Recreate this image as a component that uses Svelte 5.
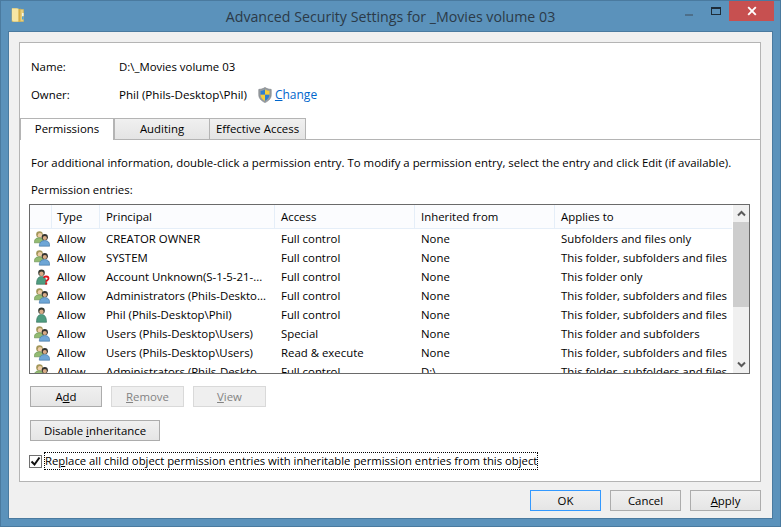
<script>
  const rows = [
    { kind: 'group', type: 'Allow', principal: 'CREATOR OWNER', access: 'Full control', inherited: 'None', applies: 'Subfolders and files only' },
    { kind: 'group', type: 'Allow', principal: 'SYSTEM', access: 'Full control', inherited: 'None', applies: 'This folder, subfolders and files' },
    { kind: 'unknown', type: 'Allow', principal: 'Account Unknown(S-1-5-21-...', access: 'Full control', inherited: 'None', applies: 'This folder only' },
    { kind: 'group', type: 'Allow', principal: 'Administrators (Phils-Deskto...', access: 'Full control', inherited: 'None', applies: 'This folder, subfolders and files' },
    { kind: 'user', type: 'Allow', principal: 'Phil (Phils-Desktop\\Phil)', access: 'Full control', inherited: 'None', applies: 'This folder, subfolders and files' },
    { kind: 'group', type: 'Allow', principal: 'Users (Phils-Desktop\\Users)', access: 'Special', inherited: 'None', applies: 'This folder and subfolders' },
    { kind: 'group', type: 'Allow', principal: 'Users (Phils-Desktop\\Users)', access: 'Read & execute', inherited: 'None', applies: 'This folder, subfolders and files' },
    { kind: 'group', type: 'Allow', principal: 'Administrators (Phils-Deskto...', access: 'Full control', inherited: 'D:\\', applies: 'This folder, subfolders and files' }
  ];
</script>

<div class="window">
  <header class="titlebar">
    <div class="title-left">
      <svg class="folder" width="14" height="16" viewBox="0 0 14 16">
        <path d="M1 1.500h5l1 1h5.500v12H1z" fill="#e8cf7c" stroke="#d9bb5c" stroke-width=".6"/>
        <path d="M1 1.500h6.500v13H2.500L1 13z" fill="#f6e6a4"/>
        <path d="M7.500 2.500l2-1v13l-2 .5z" fill="#d4ae48"/>
        <rect x="11" y="6" width="1.600" height="3" fill="#f4f4e8"/>
        <rect x="11" y="9.500" width="1.600" height="3" fill="#4fa3dc"/>
      </svg>
    </div>
    <h1>Advanced Security Settings for _Movies volume 03</h1>
    <div class="controls">
      <span class="min"></span>
      <span class="max"></span>
      <span class="close">
        <svg width="10" height="10" viewBox="0 0 10 10"><path d="M1.200 1.200l7.600 7.600M8.800 1.200l-7.600 7.600" stroke="#fff" stroke-width="1.900"/></svg>
      </span>
    </div>
  </header>

  <main class="client">
    <section class="panel">
      <div class="info">
        <div class="info-row"><span class="info-label">Name:</span><span>D:\_Movies volume 03</span></div>
        <div class="info-row">
          <span class="info-label">Owner:</span><span class="owner">Phil (Phils-Desktop\Phil)</span>
          <svg class="shield" width="14" height="16" viewBox="0 0 14 16">
            <path d="M7 .5C5 1.800 3 2.300.8 2.400v5.400c0 3.600 2.600 6.200 6.200 7.700 3.600-1.500 6.200-4.100 6.200-7.700V2.400C11 2.300 9 1.800 7 .5z" fill="#9a9ea2" stroke="#6f7478" stroke-width=".6"/>
            <path d="M7 2.400v5.300H2.600V3.900C4.300 3.800 5.700 3.300 7 2.400z" fill="#2f7fd0"/>
            <path d="M7 2.400c1.300.9 2.700 1.400 4.400 1.500v3.800H7z" fill="#f5cf3c"/>
            <path d="M2.600 7.700H7v6c-2.600-1.200-4.400-3.300-4.400-6z" fill="#f5cf3c"/>
            <path d="M7 7.700h4.400c0 2.700-1.800 4.800-4.400 6z" fill="#2f7fd0"/>
          </svg>
          <a class="link" href="#change"><u>C</u>hange</a>
        </div>
      </div>

      <nav class="tabs">
        <span class="tab active">Permissions</span>
        <span class="tab">Auditing</span>
        <span class="tab wide">Effective Access</span>
      </nav>

      <div class="tab-body">
        <p class="hint">For additional information, double-click a permission entry. To modify a permission entry, select the entry and click Edit (if available).</p>
        <p class="entries-label">Permission entries:</p>

        <div class="list">
          <div class="list-main">
            <div class="row head">
              <span class="cell icon-cell"></span>
              <span class="cell type">Type</span>
              <span class="cell">Principal</span>
              <span class="cell">Access</span>
              <span class="cell">Inherited from</span>
              <span class="cell">Applies to</span>
            </div>
            {#each rows as r}
              <div class="row">
                <span class="icon-cell">
                  <svg width="16" height="16" viewBox="0 0 16 16">
                    {#if r.kind === 'group'}
                      <circle cx="5.500" cy="3.500" r="3.300" fill="#a39658"/>
                      <circle cx="6" cy="4.300" r="2.200" fill="#eccba6"/>
                      <path d="M.3 11.800c0-3.800 2-5 5-5s4.500 1.200 4.500 5z" fill="#93bb72" stroke="#5f8a4a" stroke-width=".6"/>
                      <circle cx="10.800" cy="6.200" r="3.100" fill="#33332f"/>
                      <circle cx="10.800" cy="7" r="2.100" fill="#d8ab86"/>
                      <path d="M5.300 15.200c0-4 2.200-5.600 5.400-5.600s5 1.600 5 5.600z" fill="#6ea6d6" stroke="#3e6f9c" stroke-width=".6"/>
                    {:else}
                      <circle cx="7.500" cy="3.800" r="3.300" fill="#33372f"/>
                      <circle cx="7.500" cy="4.700" r="2.200" fill="#d8ab86"/>
                      <path d="M2.500 15.300c0-5.300 1.800-7.800 5-7.800s5 2.500 5 7.800z" fill="#4f9c80" stroke="#2f6d58" stroke-width=".6"/>
                      {#if r.kind === 'unknown'}
                        <path d="M9.800 8.700c.4-1.600 4.700-1.800 4.700.7 0 1.700-2.300 1.800-2.300 3.300" fill="none" stroke="#e0141c" stroke-width="1.800"/>
                        <rect x="11.200" y="13.500" width="2" height="2" fill="#e0141c"/>
                      {/if}
                    {/if}
                  </svg>
                </span>
                <span class="cell type">{r.type}</span>
                <span class="cell">{r.principal}</span>
                <span class="cell">{r.access}</span>
                <span class="cell">{r.inherited}</span>
                <span class="cell">{r.applies}</span>
              </div>
            {/each}
          </div>
          <div class="scrollbar">
            <svg width="17" height="17" viewBox="0 0 17 17"><path d="M5 10.500l3.500-3.500 3.500 3.500" fill="none" stroke="#5a5a5a" stroke-width="2"/></svg>
            <div class="track"><div class="thumb"></div></div>
            <svg width="17" height="17" viewBox="0 0 17 17"><path d="M5 6.500l3.500 3.500 3.500-3.500" fill="none" stroke="#5a5a5a" stroke-width="2"/></svg>
          </div>
        </div>

        <div class="btn-row">
          <button class="btn">A<u>d</u>d</button>
          <button class="btn off"><u>R</u>emove</button>
          <button class="btn off"><u>V</u>iew</button>
        </div>
        <button class="btn disable">Disable <u>i</u>nheritance</button>

        <label class="check">
          <span class="box">
            <svg width="11" height="11" viewBox="0 0 11 11"><path d="M1.500 5.500l3 3 5-7" fill="none" stroke="#111" stroke-width="2"/></svg>
          </span>
          <span class="check-text">Re<u>p</u>lace all child object permission entries with inheritable permission entries from this object</span>
        </label>
      </div>
    </section>

    <footer class="footer">
      <button class="btn foot default">OK</button>
      <button class="btn foot">Cancel</button>
      <button class="btn foot"><u>A</u>pply</button>
    </footer>
  </main>
</div>

<style>
  :global(body) { margin: 0; background: #5b92bb; }
  .window {
    box-sizing: border-box; width: 781px; height: 527px;
    background: #5b92bb; border: 1px solid #4a7a9f;
    display: flex; flex-direction: column;
    font: 11.4px/16px "Open Sans", "Noto Sans", sans-serif; color: #000;
  }
  .titlebar {
    height: 30px; flex: none;
    display: grid; grid-template-columns: 1fr auto 1fr; align-items: start;
  }
  .title-left { padding: 6px 0 0 10px; }
  .folder { display: block; }
  h1 { margin: 0; padding-top: 6px; font: 14.2px/20px "Open Sans", sans-serif; color: #2b3a48; }
  .controls { display: flex; justify-content: flex-end; padding-right: 6px; align-items: flex-start; }
  .min { width: 8px; height: 2px; background: #4d6f8a; margin: 13px 18px 0 0; }
  .max { box-sizing: border-box; width: 10px; height: 8px; border: 1px solid #1d2c38; border-top-width: 2px; margin: 6px 8px 0 0; }
  .close { width: 45px; height: 20px; background: #c75050; display: flex; align-items: center; justify-content: center; }

  .client {
    flex: 1; margin: 0 7px 7px; background: #f0f0f0;
    border: 1px solid #4a7a9f;
    box-sizing: border-box; display: flex; flex-direction: column;
    padding: 10px 11px 0 10px;
  }
  .panel {
    box-sizing: border-box; height: 440px; background: #fff;
    border: 1px solid #b4b4b4; display: flex; flex-direction: column;
  }
  .info { padding: 16px 0 0 11px; height: 59px; flex: none; }
  .info-row { display: flex; align-items: center; height: 16px; margin-bottom: 12px; }
  .info-label { width: 88px; }
  .owner { font-size: 11.6px; }
  .shield { margin: 0 3px 0 11px; }
  .link { color: #0066cc; text-decoration: none; font-size: 12px; }

  .tabs {
    display: flex; height: 21px; flex: none;
    border-bottom: 1px solid #b4b4b4;
  }
  .tab {
    box-sizing: border-box; width: 95px; height: 21px;
    display: flex; align-items: center; justify-content: center;
    border: 1px solid #b4b4b4; border-bottom: 0; border-left: 0;
    background: linear-gradient(#f0f0f0, #e4e4e4);
  }
  .tab.wide { width: 96px; }
  .tab.active { background: #fff; height: 22px; padding-bottom: 1px; border-left: 1px solid #b4b4b4; border-right-width: 2px; }

  .tab-body { padding: 0 10px; flex: 1; display: flex; flex-direction: column; }
  .hint { margin: 15px 0 0 1px; white-space: nowrap; }
  .entries-label { margin: 11px 0 0 1px; }

  .list {
    box-sizing: border-box; width: 721px; height: 170px; margin: 6px 0 0 -1px;
    border: 1px solid #6a6a6a; display: flex; overflow: hidden;
  }
  .list-main { width: 702px; flex: none; overflow: hidden; }
  .row {
    display: grid; grid-template-columns: 22px 48px 175px 140px 140px 178px;
    height: 19px; align-items: center;
  }
  .row.head { box-sizing: border-box; height: 24px; border-bottom: 1px solid #e5eef8; background: #fbfcfe; }
  .head .cell { height: 100%; border-right: 1px solid #e5eef8; display: flex; align-items: center; box-sizing: border-box; }
  .icon-cell { display: flex; padding-left: 4px; }
  .cell { padding-left: 6px; white-space: nowrap; overflow: hidden; }
  .cell.type { padding-left: 5px; }
  .scrollbar { width: 17px; flex: none; background: #f0f0f0; display: flex; flex-direction: column; margin-left: 1px; }
  .scrollbar svg { flex: none; display: block; }
  .track { flex: 1; }
  .thumb { height: 85px; background: #cdcdcd; }

  .btn {
    box-sizing: border-box; width: 72px; height: 21px; padding: 0;
    border: 1px solid #acacac; background: linear-gradient(#f0f0f0, #e5e5e5);
    font: inherit; color: #000; text-align: center;
  }
  .btn.off { width: 73px; border-color: #d9d9d9; background: #efefef; color: #838383; }
  .btn-row { display: flex; gap: 9px; margin-top: 12px; }
  .btn.disable { width: 130px; margin-top: 13px; }

  .check { display: flex; align-items: center; margin: 12px 0 0 -1px; }
  .box {
    box-sizing: border-box; width: 13px; height: 13px; border: 1px solid #707070; background: #fff;
    display: flex; align-items: center; justify-content: center; flex: none;
  }
  .check-text { margin-left: 3px; outline: 1px dotted #000; font-size: 11.3px; line-height: 16px; white-space: nowrap; }

  .footer { display: flex; justify-content: flex-end; gap: 9px; margin-top: 8px; }
  .btn.foot { width: 71px; }
  .btn.default { border-color: #3399ff; }
</style>
